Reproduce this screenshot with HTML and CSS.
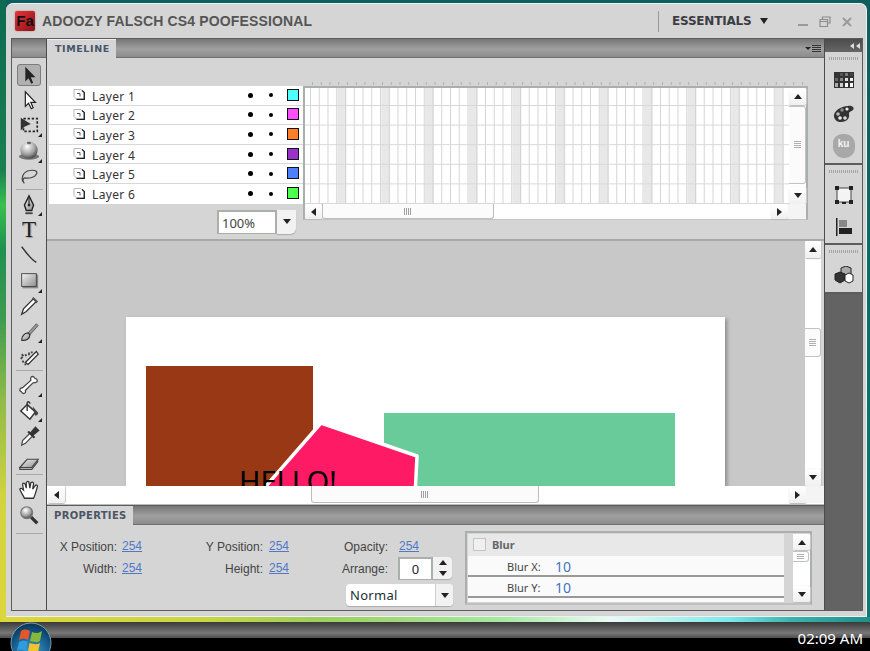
FILE: index.html
```html
<!DOCTYPE html>
<html lang="en">
  <head>
    <meta charset="UTF-8" />
    <meta name="viewport" content="width=device-width, initial-scale=1.0" />
    <title>Adoozy Falsch CS4 Poofessional</title>
    <link rel="stylesheet" href="styles.css">
  </head>
  <body>
    <svg class="defs" width="0" height="0">
      <defs>
        <linearGradient id="steel" x1="0" y1="0" x2="1" y2="1">
          <stop offset="0" stop-color="#f4f4f4" />
          <stop offset="1" stop-color="#8c8c8c" />
        </linearGradient>
        <radialGradient id="ball" cx="0.4" cy="0.3" r="0.75">
          <stop offset="0" stop-color="#ffffff" />
          <stop offset="0.6" stop-color="#a0a0a0" />
          <stop offset="1" stop-color="#3a3a3a" />
        </radialGradient>
        <symbol id="layer-icon" viewBox="0 0 12 12">
          <path d="M1 1.5H8L11 4.5V11H3.5L1 8.5Z" fill="#fff" stroke="#9a9a9a" stroke-width=".7" />
          <path d="M9 2.5L11.3 4.5V11.5H3.5" fill="none" stroke="#222" stroke-width="1.3" />
          <path d="M4 5.5H7V8.5" fill="none" stroke="#555" stroke-width="1" />
        </symbol>
      </defs>
    </svg>

    <div class="desktop">
      <div class="window">
        <header class="titlebar">
          <div class="app-logo">Fa</div>
          <div class="app-name">ADOOZY FALSCH CS4 POOFESSIONAL</div>
          <div class="workspace-switch">
            <span>ESSENTIALS</span>
            <i class="arrow arrow-down big"></i>
          </div>
          <div class="win-controls">
            <svg width="12" height="10" viewBox="0 0 12 10"><rect x="1" y="7" width="10" height="2" fill="#9a9a9a" /></svg>
            <svg width="12" height="12" viewBox="0 0 12 12"><path d="M3.5 3V1H11V7H8.5M1 3.5H8.5V10.5H1ZM1 5.5H8.5" fill="none" stroke="#8c8c8c" stroke-width="1.2" /></svg>
            <svg width="12" height="12" viewBox="0 0 12 12"><path d="M2 2L10 10M10 2L2 10" stroke="#9a9a9a" stroke-width="2" /></svg>
          </div>
        </header>

        <div class="workspace">
          <aside class="tools">
            <div class="tabbar"></div>
            <div class="tool-list">
              <div class="tool selected">
                <svg viewBox="0 0 24 24"><path d="M8 3V19L11.5 15.5L14.5 21.5L16.5 20.5L14 14.5H19Z" fill="#222" /></svg>
              </div>
              <div class="tool">
                <svg viewBox="0 0 24 24"><path d="M8 3V19L11.5 15.5L14.5 21.5L16.5 20.5L14 14.5H19Z" fill="#fff" stroke="#222" stroke-width="1.3" /></svg>
              </div>
              <div class="tool more">
                <svg viewBox="0 0 24 24"><rect x="6" y="5" width="15" height="14" fill="none" stroke="#222" stroke-width="1.8" stroke-dasharray="2.5 2" /><path d="M3 4V18L7 14L14 11Z" fill="#333" /></svg>
              </div>
              <div class="tool more">
                <svg viewBox="0 0 24 24"><ellipse cx="12" cy="18" rx="11" ry="3.5" fill="#777" /><circle cx="12" cy="11" r="9.5" fill="url(#ball)" /><path d="M10 2H14V4.5H10Z" fill="#666" /></svg>
              </div>
              <div class="tool">
                <svg viewBox="0 0 24 24"><path d="M6 19C3 15 5 7 13 6C19 5 22 7 20 10C18 14 11 15 7 14M7 14C5 15 5 18 7 20" fill="none" stroke="#444" stroke-width="1.3" /></svg>
              </div>
              <div class="tool-sep first"></div>
              <div class="tool more">
                <svg viewBox="0 0 24 24"><path d="M12 2L17 12L15 18H9L7 12Z" fill="url(#steel)" stroke="#222" stroke-width="1.5" /><path d="M12 4V11" stroke="#222" stroke-width="1.2" /><circle cx="12" cy="12" r="1.5" fill="#222" /><path d="M8 20H16V22H8Z" fill="#444" /></svg>
              </div>
              <div class="tool type-tool">T</div>
              <div class="tool">
                <svg viewBox="0 0 24 24"><path d="M4 3C9 9 13 16 20 20" fill="none" stroke="#333" stroke-width="1.5" /></svg>
              </div>
              <div class="tool more">
                <svg viewBox="0 0 24 24"><rect x="5" y="5" width="17" height="15" fill="#888" /><rect x="4" y="4" width="16" height="14" fill="url(#steel)" stroke="#444" /></svg>
              </div>
              <div class="tool">
                <svg viewBox="0 0 24 24"><path d="M4 21L6 15L17 4L20 7L9 18Z" fill="#fff" stroke="#333" stroke-width="1.4" /><path d="M16 3L21 8" stroke="#555" stroke-width="2.5" /></svg>
              </div>
              <div class="tool more">
                <svg viewBox="0 0 24 24"><path d="M11 13L20 3L22 5L13 15Z" fill="#999" stroke="#555" /><path d="M4 21C4 17 7 13 11 13L13 15C13 19 9 22 4 21Z" fill="url(#steel)" stroke="#333" stroke-width="1.3" /></svg>
              </div>
              <div class="tool">
                <svg viewBox="0 0 24 24"><path d="M8 18L20 6L22 9L11 20Z" fill="#fff" stroke="#333" stroke-width="1.4" /><path d="M3 14L5 12M5 18L6 16M8 9L9 11M12 7L12 10M4 9L6 11M15 6L15 8M8 21L8 19" stroke="#444" stroke-width="2" /></svg>
              </div>
              <div class="tool-sep"></div>
              <div class="tool more">
                <svg viewBox="0 0 24 24"><path d="M5 15L14 7C13 4 15 2 17 3C18 4 18 5 19 5C21 5 22 8 20 9C18 10 17 9 16 10L8 18C9 20 7 22 5 21C4 20 4 19 3 19C1 18 2 15 5 15Z" fill="#fff" stroke="#444" stroke-width="1.4" /></svg>
              </div>
              <div class="tool more">
                <svg viewBox="0 0 24 24"><path d="M3 12L10 5L19 13L13 21Z" fill="#fff" stroke="#333" stroke-width="1.6" /><path d="M10 12V3C11 1 13 2 13 4" fill="none" stroke="#333" stroke-width="1.5" /><path d="M16 7L22 14C22 17 19 18 18 16Z" fill="#444" /></svg>
              </div>
              <div class="tool">
                <svg viewBox="0 0 24 24"><path d="M4 22L5 17L13 9L16 12L8 20Z" fill="#fff" stroke="#444" stroke-width="1.3" /><path d="M11 7L18 14M14 9L19 3L22 6L16 11" fill="#333" stroke="#333" stroke-width="2.2" /></svg>
              </div>
              <div class="tool">
                <svg viewBox="0 0 24 24"><path d="M2 18L10 9H22L15 18Z" fill="url(#steel)" stroke="#444" stroke-width="1.3" /><path d="M2 18V20H15L22 11" fill="none" stroke="#444" stroke-width="1.3" /></svg>
              </div>
              <div class="tool-sep wide"></div>
              <div class="tool">
                <svg viewBox="0 0 24 24"><path d="M7 21C6 18 2 13 2 11C3 9 5 11 6 12L5 6C5 4 7 4 8 6L9 10L9 4C10 2 12 2 12 4L13 10L14 4C15 3 17 3 17 5L16 11L19 7C20 6 22 7 21 9C20 12 19 17 17 21Z" fill="#fff" stroke="#333" stroke-width="1.4" /></svg>
              </div>
              <div class="tool">
                <svg viewBox="0 0 24 24"><path d="M14 14L21 21" stroke="#333" stroke-width="3.5" /><circle cx="9.5" cy="9.5" r="6.5" fill="url(#ball)" stroke="#777" stroke-width="1.2" /></svg>
              </div>
              <div class="tool-sep last"></div>
            </div>
          </aside>

          <main class="main">
            <div class="tabbar">
              <div class="tab">TIMELINE</div>
              <div class="panel-menu">
                <i class="arrow arrow-down"></i>
                <span class="menu-lines"></span>
              </div>
            </div>

            <section class="timeline">
              <div class="timeline-left">
                <ul class="layers">
                  <li class="layer">
                    <svg class="layer-icon"><use href="#layer-icon" /></svg>
                    <span class="layer-name">Layer 1</span>
                    <i class="dot"></i><i class="dot small"></i>
                    <span class="swatch swatch-cyan"></span>
                  </li>
                  <li class="layer">
                    <svg class="layer-icon"><use href="#layer-icon" /></svg>
                    <span class="layer-name">Layer 2</span>
                    <i class="dot"></i><i class="dot small"></i>
                    <span class="swatch swatch-pink"></span>
                  </li>
                  <li class="layer">
                    <svg class="layer-icon"><use href="#layer-icon" /></svg>
                    <span class="layer-name">Layer 3</span>
                    <i class="dot"></i><i class="dot small"></i>
                    <span class="swatch swatch-orange"></span>
                  </li>
                  <li class="layer">
                    <svg class="layer-icon"><use href="#layer-icon" /></svg>
                    <span class="layer-name">Layer 4</span>
                    <i class="dot"></i><i class="dot small"></i>
                    <span class="swatch swatch-purple"></span>
                  </li>
                  <li class="layer">
                    <svg class="layer-icon"><use href="#layer-icon" /></svg>
                    <span class="layer-name">Layer 5</span>
                    <i class="dot"></i><i class="dot small"></i>
                    <span class="swatch swatch-blue"></span>
                  </li>
                  <li class="layer">
                    <svg class="layer-icon"><use href="#layer-icon" /></svg>
                    <span class="layer-name">Layer 6</span>
                    <i class="dot"></i><i class="dot small"></i>
                    <span class="swatch swatch-green"></span>
                  </li>
                </ul>
                <div class="zoom-row">
                  <div class="zoom-field">100%</div>
                  <div class="drop-btn"><i class="arrow arrow-down"></i></div>
                </div>
              </div>

              <div class="timeline-right">
                <div class="ruler"></div>
                <div class="frames-box">
                  <div class="frames-row">
                    <div class="frames"></div>
                    <div class="vscroll frames-vscroll">
                      <div class="scroll-btn"><i class="arrow arrow-up"></i></div>
                      <div class="vtrack"><div class="vthumb fill"><span class="grip-h"></span></div></div>
                      <div class="scroll-btn"><i class="arrow arrow-down"></i></div>
                    </div>
                  </div>
                  <div class="hscroll">
                    <div class="scroll-btn"><i class="arrow arrow-left"></i></div>
                    <div class="htrack"><div class="hthumb frames-thumb"><span class="grip-v"></span></div></div>
                    <div class="scroll-btn"><i class="arrow arrow-right"></i></div>
                    <div class="scroll-corner"></div>
                  </div>
                </div>
              </div>
            </section>

            <section class="stage">
              <div class="stage-row">
                <div class="stage-view">
                  <div class="canvas">
                    <div class="shape-brown"></div>
                    <div class="shape-green"></div>
                    <svg class="shape-pink" width="320" height="200" viewBox="0 0 320 200">
                      <path d="M195 106L291 139L288 200H113Z" fill="#ff1a66" stroke="#fff" stroke-width="3.5" stroke-linejoin="round" />
                    </svg>
                    <div class="hello">HELLO!</div>
                  </div>
                </div>
                <div class="vscroll stage-vscroll">
                  <div class="scroll-btn"><i class="arrow arrow-up"></i></div>
                  <div class="vtrack"><div class="vthumb stage-vthumb"><span class="grip-h"></span></div></div>
                  <div class="scroll-btn"><i class="arrow arrow-down"></i></div>
                </div>
              </div>
              <div class="hscroll stage-hscroll">
                <div class="scroll-btn"><i class="arrow arrow-left"></i></div>
                <div class="htrack"><div class="hthumb stage-thumb"><span class="grip-v"></span></div></div>
                <div class="scroll-btn"><i class="arrow arrow-right"></i></div>
                <div class="scroll-corner"></div>
              </div>
            </section>

            <div class="tabbar props-bar">
              <div class="tab props-tab">PROPERTIES</div>
            </div>

            <section class="properties">
              <div class="prop-grid">
                <label>X Position:</label><a class="val v1">254</a>
                <label>Y Position:</label><a class="val v2">254</a>
                <label>Opacity:</label><a class="val v3">254</a>
                <label>Width:</label><a class="val v1">254</a>
                <label>Height:</label><a class="val v2">254</a>
                <label>Arrange:</label>
                <div class="stepper">
                  <div class="stepper-field">0</div>
                  <div class="stepper-btns">
                    <i class="arrow arrow-up"></i>
                    <i class="arrow arrow-down"></i>
                  </div>
                </div>
                <div class="blend-select">
                  <span class="blend-value">Normal</span>
                  <div class="blend-btn"><i class="arrow arrow-down"></i></div>
                </div>
              </div>

              <div class="filter-panel">
                <div class="filter-list">
                  <div class="filter-head"><span class="checkbox"></span>Blur</div>
                  <div class="filter-row"><span class="filter-label">Blur X:</span><span class="filter-val">10</span></div>
                  <div class="filter-row"><span class="filter-label">Blur Y:</span><span class="filter-val">10</span></div>
                </div>
                <div class="vscroll filter-vscroll">
                  <div class="scroll-btn"><i class="arrow arrow-up"></i></div>
                  <div class="vtrack"><div class="vthumb filter-thumb"><span class="grip-h"></span></div></div>
                  <div class="scroll-btn"><i class="arrow arrow-down"></i></div>
                </div>
              </div>
            </section>
          </main>

          <aside class="dock">
            <div class="dock-head"><i class="arrow arrow-left light"></i><i class="arrow arrow-left light"></i></div>
            <div class="dock-group group-one">
              <div class="dock-grip"></div>
              <div class="dock-icon">
                <svg width="20" height="16" viewBox="0 0 20 16">
                  <rect width="20" height="16" fill="#333" />
                  <rect x="6" y="1" width="3" height="3" fill="#555" /><rect x="11" y="1" width="3" height="3" fill="#777" /><rect x="16" y="1" width="3" height="3" fill="#444" />
                  <rect x="1" y="6" width="3" height="3" fill="#666" /><rect x="6" y="6" width="3" height="3" fill="#888" /><rect x="11" y="6" width="3" height="3" fill="#ddd" /><rect x="16" y="6" width="3" height="3" fill="#eee" />
                  <rect x="1" y="11" width="3" height="4" fill="#aaa" /><rect x="6" y="11" width="3" height="4" fill="#ccc" /><rect x="11" y="11" width="3" height="4" fill="#fff" /><rect x="16" y="11" width="3" height="4" fill="#fff" />
                </svg>
              </div>
              <div class="dock-icon">
                <svg width="22" height="18" viewBox="0 0 22 18">
                  <path d="M1 12C0 6 8 1 15 1C19 0 22 3 20 5C18 7 16 6 16 9C17 13 14 17 8 17C4 17 2 15 1 12Z" fill="#333" />
                  <circle cx="5" cy="9" r="1.8" fill="#bbb" /><circle cx="9" cy="5" r="1.8" fill="#888" /><circle cx="14" cy="4" r="1.6" fill="#eee" /><circle cx="7" cy="13" r="1.8" fill="#eee" /><circle cx="12" cy="13" r="1.8" fill="#ddd" />
                </svg>
              </div>
              <div class="dock-ku">ku</div>
            </div>
            <div class="dock-group group-two">
              <div class="dock-grip"></div>
              <div class="dock-icon">
                <svg width="18" height="18" viewBox="0 0 18 18">
                  <rect x="2" y="2" width="14" height="14" fill="#f4f4f4" stroke="#444" />
                  <path d="M0 0H4V4H0ZM14 0H18V4H14ZM0 14H4V18H0ZM14 14H18V18H14ZM7 16H11V18H7Z" fill="#222" />
                </svg>
              </div>
              <div class="dock-icon">
                <svg width="16" height="18" viewBox="0 0 16 18">
                  <rect x="0" y="0" width="1.5" height="18" fill="#222" />
                  <rect x="3" y="2" width="8" height="7" fill="#888" />
                  <rect x="3" y="10" width="13" height="6" fill="#222" />
                </svg>
              </div>
            </div>
            <div class="dock-group group-three">
              <div class="dock-grip"></div>
              <div class="dock-icon">
                <svg width="20" height="18" viewBox="0 0 20 18">
                  <path d="M7 2L12 0L17 2V8L12 10L7 8Z" fill="#aaa" stroke="#222" />
                  <path d="M1 8L6 6L11 8V14L6 17L1 14Z" fill="#333" stroke="#222" />
                  <path d="M11 9L15 7L19 9V15L15 17L11 15Z" fill="#fff" stroke="#222" />
                </svg>
              </div>
            </div>
          </aside>
        </div>
      </div>

      <footer class="taskbar">
        <svg class="orb" width="42" height="42" viewBox="0 0 42 42">
          <defs>
            <radialGradient id="orb-glass" cx="0.5" cy="0.75" r="0.8">
              <stop offset="0" stop-color="#3fa5d8" />
              <stop offset="0.7" stop-color="#0f4f7d" />
              <stop offset="1" stop-color="#0a2b44" />
            </radialGradient>
          </defs>
          <circle cx="21" cy="21" r="20" fill="url(#orb-glass)" stroke="#7d9bb0" />
          <path d="M11 9C15 6 18 8 20 9L18 18C15 16 12 16 9 18Z" fill="#e8552a" />
          <path d="M22 10C26 12 29 11 32 9L30 19C27 21 24 20 20 19Z" fill="#86b83a" />
          <path d="M9 20C12 18 15 18 17.5 20L16 29C13 27 10 27 7 29Z" fill="#2f9be0" />
          <path d="M19.5 21C23 22 27 23 30 21L28 30C25 32 21 32 18 30Z" fill="#f4c22c" />
        </svg>
        <div class="clock">02:09 AM</div>
      </footer>
    </div>
  </body>
</html>
```

FILE: styles.css
```css
* {
  box-sizing: border-box;
}
html,
body {
  margin: 0;
  height: 100%;
}
body {
  font-family: "Liberation Sans", Arial, sans-serif;
  overflow: hidden;
}
.defs {
  position: absolute;
}
i {
  display: block;
}
ul {
  list-style: none;
  margin: 0;
  padding: 0;
}

.desktop {
  width: 870px;
  height: 651px;
  display: flex;
  flex-direction: column;
  padding: 3px 3px 0 6px;
  background:
    linear-gradient(90deg, #dcd63a 0, #c9d640 200px, #9ccf5c 320px, #a5e8a0 500px, #e9fbf6 610px, #79e9ea 730px, #3ab3ae 790px, #1f8f8a 870px) 0 617px / 100% 5px no-repeat,
    linear-gradient(#0d6a52 0, #1a8050 170px, #38c050 205px, #1f9050 250px, #3f9c4f 320px, #8fbb48 400px, #d2d43f 500px, #dcd63a 622px) 0 0 / 6px 622px no-repeat,
    linear-gradient(#0c5f5c, #0f7a74 622px) 0 0 / 100% 622px no-repeat,
    #000;
}

/* app window */
.window {
  width: 861px;
  height: 614px;
  flex: none;
  display: flex;
  flex-direction: column;
  background: #d5d5d5;
  border-radius: 7px 7px 0 0;
  border: 1px solid #f0f0f0;
  border-width: 1px 1px 1px 0;
  padding: 0 3px 5px 5px;
}
.titlebar {
  height: 34px;
  flex: none;
  display: flex;
  align-items: center;
  padding: 0 0 0 4px;
}
.app-logo {
  width: 20px;
  height: 20px;
  background: linear-gradient(135deg, #e8343c, #8f1016);
  border-radius: 2px;
  color: #111;
  font: bold 15px/20px "Liberation Sans", sans-serif;
  text-align: center;
  box-shadow: 0 0 2px #888;
}
.app-name {
  margin-left: 7px;
  color: #555;
  font-size: 14px;
  font-weight: bold;
  letter-spacing: 0.15px;
  width: 616px;
  white-space: nowrap;
}
.workspace-switch {
  display: flex;
  align-items: center;
  height: 21px;
  width: 139px;
  border-left: 1px solid #999;
  padding-left: 13px;
  color: #3c3c44;
  font: bold 12px "DejaVu Sans", sans-serif;
  letter-spacing: -0.2px;
}
.workspace-switch .arrow {
  margin-left: 9px;
}
.win-controls {
  display: flex;
  align-items: center;
  gap: 10px;
  padding-top: 1px;
}

/* arrows */
.arrow {
  width: 0;
  height: 0;
  border-style: solid;
  border-color: transparent;
}
.arrow-up {
  border-width: 0 4px 5px;
  border-bottom-color: #222;
}
.arrow-down {
  border-width: 5px 4px 0;
  border-top-color: #222;
}
.arrow-down.big {
  border-width: 6px 4px 0;
}
.arrow-left {
  border-width: 4px 5px 4px 0;
  border-right-color: #222;
}
.arrow-right {
  border-width: 4px 0 4px 5px;
  border-left-color: #222;
}
.arrow-left.light {
  border-right-color: #ddd;
}

.workspace {
  flex: 1;
  min-height: 0;
  display: flex;
  border: 1px solid #5c5c5c;
}

.tabbar {
  height: 19px;
  flex: none;
  display: flex;
  justify-content: space-between;
  background: linear-gradient(#767676, #a0a0a0 55%, #8c8c8c);
  border-bottom: 1px solid #6e6e6e;
}
.tab {
  width: 69px;
  height: 19px;
  background: #d5d5d5;
  border-top: 1px solid #eee;
  color: #46566a;
  font: bold 9.5px/17px "DejaVu Sans", sans-serif;
  letter-spacing: 0.6px;
  padding-left: 8px;
}
.panel-menu {
  display: flex;
  align-items: center;
  gap: 1px;
  padding-right: 3px;
}
.panel-menu .arrow {
  border-width: 3px 3px 0;
}
.menu-lines {
  width: 9px;
  height: 7px;
  background: repeating-linear-gradient(#333 0 1px, transparent 1px 2px);
}

/* tools column */
.tools {
  width: 35px;
  flex: none;
  border-right: 1px solid #4c4c4c;
}
.tool-list {
  padding-top: 4px;
}
.tool {
  height: 25.4px;
  width: 24px;
  margin-left: 5px;
  position: relative;
  display: flex;
  align-items: center;
  justify-content: center;
}
.tool svg {
  width: 22px;
  height: 22px;
}
.tool.selected {
  background: #b0b0b0;
  border: 1px solid #7c7c7c;
  border-radius: 3px;
  height: 22px;
  margin-top: 2px;
  margin-bottom: 1.4px;
}
.tool.more::after {
  content: "";
  position: absolute;
  right: -1px;
  bottom: 1px;
  border-style: solid;
  border-width: 0 0 4px 4px;
  border-color: transparent transparent #222;
}
.type-tool {
  font: 23px "Liberation Serif", serif;
  color: #222;
  text-shadow: 1px 1px 1px #999;
}
.tool-sep {
  height: 1px;
  margin: 0 3px 2px 4px;
  background: #a9a9a9;
}
.tool-sep.wide {
  margin-top: 0;
  margin-bottom: 2px;
}
.tool-sep.last {
  margin-top: 5px;
}

/* main column */
.main {
  width: 778px;
  flex: none;
  display: flex;
  flex-direction: column;
  border-right: 1px solid #4c4c4c;
}
.timeline {
  height: 183px;
  flex: none;
  display: flex;
  padding: 23px 0 0 2px;
  border-bottom: 2px solid #a6aaa6;
}
.timeline-left {
  width: 254px;
  flex: none;
  padding-top: 5px;
}
.layer {
  height: 19.6px;
  display: flex;
  align-items: center;
  background: #fff;
  border-bottom: 1px solid #d8d8d8;
  padding: 2px 0 0 24px;
  color: #333;
  font: 12px/16px "Noto Sans", sans-serif;
  letter-spacing: 0.35px;
}
.layer:last-child {
  border-bottom: none;
}
.layer-icon {
  width: 12px;
  height: 12px;
  margin-top: -4px;
}
.layer-name {
  width: 156px;
  margin: 1px 0 0 7px;
}
.dot {
  width: 5px;
  height: 5px;
  margin-top: -2px;
  border-radius: 50%;
  background: #000;
}
.dot.small {
  width: 4px;
  height: 4px;
  margin-left: 16px;
}
.swatch {
  width: 12px;
  height: 12px;
  margin: -3px 0 0 14px;
  border: 1px solid #111;
}
.swatch-cyan { background: #4dffff; }
.swatch-pink { background: #ff4dff; }
.swatch-orange { background: #ff7f27; }
.swatch-purple { background: #9933cc; }
.swatch-blue { background: #4d7fff; }
.swatch-green { background: #4dff4d; }

.zoom-row {
  display: flex;
  margin: 6px 0 0 168px;
}
.zoom-field {
  width: 60px;
  height: 24px;
  background: #fff;
  border: 2px solid #a9b0aa;
  border-width: 2px 2px 1px 2px;
  color: #444;
  font: 13px/22px "Noto Sans", sans-serif;
  padding-left: 3px;
}
.drop-btn {
  width: 19px;
  height: 24px;
  background: #f2f2f2;
  border-radius: 0 0 6px 0;
  box-shadow: 0 1px 1px #aaa;
  display: flex;
  align-items: center;
  justify-content: center;
}

.timeline-right {
  flex: none;
  width: 505px;
}
.ruler {
  height: 5px;
  margin-left: 9px;
  width: 495px;
  background: linear-gradient(90deg, #b0b0a0 1px, transparent 1px) 0 1px / 8.75px 3px repeat-x;
}
.frames-box {
  border: 2px solid #a9b0aa;
  border-bottom-width: 1px;
  border-bottom-color: #c4c4c4;
  background: #f6f6f6;
  height: 134px;
}
.frames-row {
  display: flex;
  height: 116px;
}
.frames {
  flex: 1;
  background-color: #fff;
  background-image:
    linear-gradient(#d8d8d8 1px, transparent 1px),
    linear-gradient(90deg, #d4d4d4 1px, transparent 1px),
    linear-gradient(90deg, #e8e8e8 9px, transparent 9px);
  background-size: 100% 19.6px, 8.75px 100%, 43.75px 100%;
  background-position: 0 17px, 5px 0, 32.5px 0;
}

/* scrollbars */
.vscroll {
  flex: none;
  display: flex;
  flex-direction: column;
  background: #fff;
}
.scroll-btn {
  flex: none;
  width: 17px;
  height: 17px;
  background: linear-gradient(#fff, #f0f0f0);
  border-radius: 2px;
  box-shadow: 0 1px 1px #bbb, 1px 0 1px #ccc;
  display: flex;
  align-items: center;
  justify-content: center;
}
.vtrack {
  flex: 1;
  min-height: 0;
}
.vthumb {
  background: #fbfbfb;
  border: 1px solid #c2c2c2;
  border-left: none;
  border-radius: 0 3px 3px 0;
  display: flex;
  align-items: center;
  justify-content: center;
}
.vthumb.fill {
  height: 78px;
  margin-top: 1px;
}
.grip-h {
  width: 7px;
  height: 8px;
  background: repeating-linear-gradient(#b0b0b0 0 1px, transparent 1px 2px);
}
.grip-v {
  width: 8px;
  height: 7px;
  background: repeating-linear-gradient(90deg, #a0a0a0 0 1px, transparent 1px 2px);
}
.frames-vscroll {
  width: 17px;
}
.hscroll {
  display: flex;
  height: 15px;
  background: #fff;
}
.hscroll .scroll-btn {
  height: 15px;
}
.htrack {
  flex: 1;
}
.hthumb {
  height: 100%;
  background: #fbfbfb;
  border: 1px solid #bdbdbd;
  border-top: none;
  border-radius: 0 0 3px 3px;
  display: flex;
  align-items: center;
  justify-content: center;
}
.frames-thumb {
  width: 172px;
}
.scroll-corner {
  width: 18px;
  flex: none;
  background: #f4f4f4;
}

/* stage */
.stage {
  flex: 1;
  min-height: 0;
  display: flex;
  flex-direction: column;
}
.stage-row {
  flex: 1;
  min-height: 0;
  display: flex;
}
.stage-view {
  flex: 1;
  min-width: 0;
  background: #c8c8c8;
  position: relative;
  overflow: hidden;
}
.canvas {
  position: absolute;
  left: 79px;
  top: 76px;
  width: 599px;
  height: 300px;
  background: #fff;
  box-shadow: 2px 2px 4px #8a8a8a;
}
.shape-brown {
  position: absolute;
  left: 20px;
  top: 49px;
  width: 167px;
  height: 200px;
  background: #983814;
}
.shape-green {
  position: absolute;
  left: 258px;
  top: 96px;
  width: 291px;
  height: 200px;
  background: #69ca9a;
}
.shape-pink {
  position: absolute;
  left: 0;
  top: 0;
}
.hello {
  position: absolute;
  left: 113px;
  top: 147px;
  color: #000;
  font: 29px/1.2 "Noto Sans", sans-serif;
}
.stage-vscroll {
  width: 16px;
  margin-right: 3px;
}
.stage-vscroll .scroll-btn {
  width: 16px;
}
.stage-vthumb {
  height: 29px;
  margin-top: 70px;
}
.stage-hscroll {
  flex: none;
  height: 19px;
  padding-left: 1px;
  padding-bottom: 1px;
  border-bottom: 1px solid #bbb;
}
.stage-hscroll .scroll-btn {
  height: 17px;
}
.stage-thumb {
  width: 228px;
  margin-left: 246px;
}

/* properties */
.props-bar {
  height: 20px;
  border-top: 1px solid #5c5c5c;
}
.props-tab {
  width: 86px;
  height: 19px;
  border-top: none;
  color: #4c5566;
  font-size: 10px;
  line-height: 20px;
  padding-left: 7px;
  letter-spacing: 0.3px;
}
.properties {
  height: 85px;
  flex: none;
  display: flex;
  color: #444;
  font-size: 12px;
}
.prop-grid {
  width: 418px;
  flex: none;
  display: grid;
  grid-template-columns: 70px 76px 70px 55px 70px 1fr;
  grid-template-rows: 22px 22px 22px;
  padding-top: 11px;
}
.prop-grid label {
  text-align: right;
  line-height: 22px;
}
.val {
  color: #5078c8;
  text-decoration: underline;
  line-height: 21px;
}
.v1 { padding-left: 5px; }
.v2 { padding-left: 6px; }
.v3 { padding-left: 11px; }
.stepper {
  display: flex;
  margin: -1px 0 0 10px;
}
.stepper-field {
  width: 35px;
  height: 23px;
  background: #fff;
  border: 2px solid #a9b0aa;
  border-bottom-width: 1px;
  color: #223;
  font: 13px/21px "Noto Sans", sans-serif;
  text-align: center;
}
.stepper-btns {
  width: 19px;
  height: 22px;
  background: #f2f2f2;
  border-radius: 0 4px 4px 0;
  box-shadow: 0 1px 1px #aaa;
  display: flex;
  flex-direction: column;
  align-items: center;
  justify-content: space-around;
}
.blend-select {
  grid-column: 5 / 7;
  grid-row: 3;
  margin: 4px 0 -4px 28px;
  width: 107px;
  height: 22px;
  display: flex;
  background: #fff;
  border-radius: 4px;
  box-shadow: 0 1px 1px #aaa;
}
.blend-value {
  flex: 1;
  padding-left: 4px;
  color: #1d3038;
  font: 13px/23px "Noto Sans", sans-serif;
  letter-spacing: 0.3px;
}
.blend-btn {
  width: 18px;
  background: #f2f2f2;
  border-left: 1px solid #ccc;
  border-radius: 0 4px 4px 0;
  display: flex;
  align-items: center;
  justify-content: center;
}
.filter-panel {
  width: 347px;
  height: 74px;
  margin-top: 6px;
  flex: none;
  display: flex;
  gap: 9px;
  padding: 1px;
  border: 2px solid #a9b0aa;
  border-bottom-color: #c0c0c0;
}
.filter-list {
  width: 316px;
  flex: none;
  background: #fafafa;
  font-family: "Noto Sans", sans-serif;
  font-size: 11px;
  overflow: hidden;
}
.filter-head {
  height: 22px;
  display: flex;
  align-items: center;
  background: #e8e8e8;
  color: #666;
  font-weight: bold;
  font-size: 11px;
  padding: 0 0 1px 5px;
}
.checkbox {
  width: 13px;
  height: 13px;
  margin-right: 6px;
  background: #f0f0f0;
  border: 1px solid #c4c4c4;
}
.filter-row {
  height: 21px;
  display: flex;
  align-items: center;
  border-bottom: 2px solid #999;
  padding: 0 0 0 39px;
  color: #444;
}
.filter-label {
  width: 48px;
  margin-top: 1px;
}
.filter-val {
  color: #3f74c4;
  font-size: 14px;
  line-height: 16px;
  margin-top: 3px;
}
.filter-vscroll {
  width: 17px;
  height: 68px;
}
.filter-vscroll .scroll-btn {
  height: 16px;
}
.filter-thumb {
  width: 16px;
  height: 11px;
  margin-top: 1px;
}
.filter-thumb .grip-h {
  height: 6px;
}

/* right dock */
.dock {
  flex: 1;
  background: #636363;
  display: flex;
  flex-direction: column;
}
.dock-head {
  height: 13px;
  flex: none;
  display: flex;
  justify-content: flex-end;
  align-items: center;
  gap: 2px;
  padding-right: 2px;
  background: linear-gradient(#4c4c4c, #666);
}
.dock-head .arrow {
  border-width: 3.5px 4px 3.5px 0;
}
.dock-group {
  flex: none;
  background: #d5d5d5;
  border-bottom: 2px solid #5c5c5c;
  display: flex;
  flex-direction: column;
  align-items: center;
}
.group-one {
  height: 113px;
}
.group-two {
  height: 80px;
}
.group-three {
  height: 49px;
}
.dock-grip {
  width: 30px;
  height: 3px;
  margin: 5px 0 0;
  background: repeating-linear-gradient(90deg, #a5a5a5 0 1px, transparent 1px 2px);
}
.dock-icon {
  height: 32px;
  display: flex;
  align-items: center;
  justify-content: center;
}
.group-one .dock-icon:nth-child(2) {
  margin-top: 4px;
}
.group-one .dock-icon:nth-child(3) {
  margin-top: 2px;
}
.group-two .dock-icon:nth-child(2) {
  margin-top: 6px;
}
.group-two .dock-icon:nth-child(3) {
  margin-top: 1px;
}
.group-three .dock-icon:nth-child(2) {
  margin-top: 6px;
}
.dock-ku {
  width: 22px;
  height: 24px;
  margin-top: 4px;
  background: #a8a8a8;
  border-radius: 9px 10px 10px 11px;
  color: #f4f4f4;
  font: bold 10px/20px "Liberation Sans", sans-serif;
  text-align: center;
}

/* taskbar */
.taskbar {
  height: 29px;
  margin: 5px -3px 0 -6px;
  flex: none;
  position: relative;
  overflow: hidden;
  background: linear-gradient(#3a3a3a, #777 11px, #4e4e4e 16px, #000 16px);
}
.orb {
  position: absolute;
  left: 10px;
  top: 0;
}
.clock {
  position: absolute;
  right: 7px;
  top: 6px;
  color: #fff;
  font: 15px/20px "Noto Sans", sans-serif;
}
```
